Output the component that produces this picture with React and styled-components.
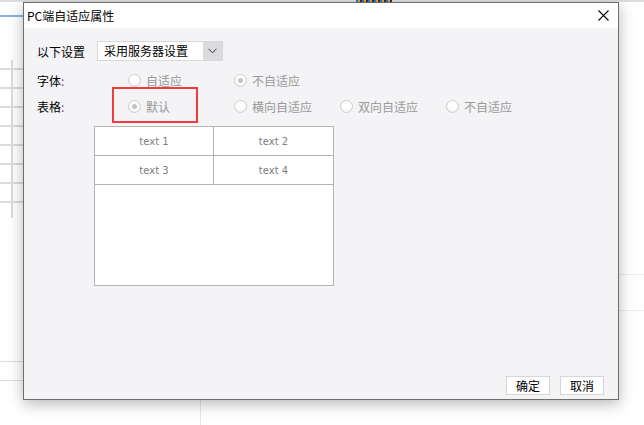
import React from "react";
import styled, { createGlobalStyle } from "styled-components";

const Global = createGlobalStyle`
  html, body { margin: 0; padding: 0; background: #ffffff; }
  body { font-family: "Noto Sans CJK SC", "Noto Sans", sans-serif; font-size: 12px; color: #000; }
  #root { width: 644px; height: 425px; }
`;

const Page = styled.div`
  position: relative;
  width: 644px;
  height: 425px;
  overflow: hidden;
  background: #ffffff;
`;

/* ---- backdrop: the page that lies under the modal ---- */
const TopStrip = styled.div`
  position: absolute;
  left: 0;
  top: 0;
  width: 644px;
  height: 2px;
  background: #dedede;
`;

const Dots = styled.div`
  position: absolute;
  left: 356px;
  top: 0;
  width: 36px;
  height: 2px;
  background: repeating-linear-gradient(90deg, #2a7ad0 0 2px, #f0a030 2px 4px, #333 4px 6px);
`;

const HRule = styled.div`
  position: absolute;
  left: ${(p) => p.$x}px;
  top: ${(p) => p.$y}px;
  width: ${(p) => p.$w}px;
  height: ${(p) => p.$h || 1}px;
  background: ${(p) => p.$c || "#dcdcdc"};
`;

const SheetGrid = styled.div`
  position: absolute;
  left: 0;
  top: 60px;
  width: 24px;
  height: 158px;
  background:
    linear-gradient(90deg, transparent 11px, #dcdcdc 11px, #dcdcdc 13px, transparent 13px),
    repeating-linear-gradient(180deg, transparent 0 8px, #dcdcdc 8px 10px, transparent 10px 19px);
`;

/* ---- dialog ---- */
const Dialog = styled.div`
  position: absolute;
  left: 23px;
  top: 2px;
  width: 596px;
  height: 398px;
  box-sizing: border-box;
  border: 1px solid #6e6e6e;
  background: #f4f4f6;
  box-shadow: 0 4px 14px rgba(0, 0, 0, 0.28);
  display: flex;
  flex-direction: column;
`;

const TitleBar = styled.div`
  height: 25px;
  flex: none;
  background: #ffffff;
  display: flex;
  align-items: center;
  justify-content: space-between;
  padding: 0 9px 0 3px;
`;

const Title = styled.span`
  font-size: 12px;
  color: #000;
  line-height: 25px;
`;

const CloseBtn = styled.button`
  width: 12px;
  height: 12px;
  padding: 0;
  border: none;
  background: transparent;
  display: flex;
  align-items: center;
  justify-content: center;
`;

const Body = styled.div`
  flex: 1;
  display: flex;
  flex-direction: column;
  padding: 13px 13px 4px 13px;
`;

const SettingRow = styled.div`
  height: 20px;
  display: flex;
  align-items: center;
  gap: 11px;
`;

const Label = styled.span`
  font-size: 12px;
  color: #000;
  width: ${(p) => p.$w || "auto"}px;
  flex: none;
`;

const Colon = styled.span`
  color: #8a3a8a;
`;

const Select = styled.div`
  width: 126px;
  height: 20px;
  box-sizing: border-box;
  border: 1px solid #d8d8d8;
  background: #ffffff;
  display: flex;
  align-items: stretch;
  margin-left: 1px;
`;

const SelectText = styled.span`
  flex: 1;
  padding-left: 6px;
  line-height: 18px;
  font-size: 12px;
  color: #000;
`;

const SelectArrow = styled.span`
  width: 19px;
  background: #dadbde;
  display: flex;
  align-items: center;
  justify-content: center;
`;

const OptionRows = styled.div`
  margin-top: 6px;
  display: flex;
  flex-direction: column;
`;

const OptionRow = styled.div`
  height: 26px;
  display: flex;
  align-items: center;
`;

const Option = styled.label`
  position: relative;
  width: 106px;
  height: 18px;
  flex: none;
  display: flex;
  align-items: center;
  gap: 5px;
  color: #999999;
  font-size: 12px;
`;

const Radio = styled.span`
  width: 13px;
  height: 13px;
  box-sizing: border-box;
  border-radius: 50%;
  border: 1px solid #cfcfca;
  background: radial-gradient(circle at 50% 35%, #ffffff 40%, #ececec 100%);
  display: flex;
  align-items: center;
  justify-content: center;
  &::after {
    content: "";
    width: 5px;
    height: 5px;
    border-radius: 50%;
    background: ${(p) => (p.$checked ? "#c4c4c0" : "transparent")};
  }
`;

const Highlight = styled.span`
  position: absolute;
  left: -16px;
  top: -10px;
  width: 86px;
  height: 36px;
  box-sizing: border-box;
  border: 2px solid #f23c3c;
  pointer-events: none;
`;

const Preview = styled.div`
  margin: 7px 0 0 57px;
  width: 240px;
  height: 160px;
  box-sizing: border-box;
  border: 1px solid #b4b4b4;
  background: #ffffff;
  display: grid;
  grid-template-columns: 119px 1fr;
  grid-template-rows: 29px 29px;
  align-content: start;
`;

const Cell = styled.div`
  border-right: ${(p) => (p.$last ? "none" : "1px solid #b4b4b4")};
  border-bottom: 1px solid #b4b4b4;
  display: flex;
  align-items: center;
  justify-content: center;
  font-family: "DejaVu Sans", "Liberation Sans", sans-serif;
  font-size: 10px;
  color: #808080;
`;

const Footer = styled.div`
  margin-top: auto;
  display: flex;
  justify-content: flex-end;
  gap: 10px;
  padding-right: 1px;
`;

const Button = styled.button`
  width: 44px;
  height: 19px;
  box-sizing: border-box;
  border: 1px solid #d6d6d6;
  background: #ffffff;
  font-family: "Noto Sans CJK SC", sans-serif;
  font-size: 12px;
  color: #000;
  padding: 0;
  line-height: 17px;
`;

const fontOpts = [
  { text: "自适应", checked: false },
  { text: "不自适应", checked: true },
];
const tableOpts = [
  { text: "默认", checked: true, mark: true },
  { text: "横向自适应", checked: false },
  { text: "双向自适应", checked: false },
  { text: "不自适应", checked: false },
];

export default function App() {
  return (
    <Page>
      <Global />
      <TopStrip />
      <Dots />
      <HRule $x={0} $y={15} $w={24} $h={2} $c="#86b2ec" />
      <SheetGrid />
      <HRule $x={0} $y={361} $w={24} />
      <HRule $x={0} $y={380} $w={24} />
      <HRule $x={618} $y={274} $w={26} $c="#ececec" />
      <HRule $x={618} $y={310} $w={26} $c="#ececec" />
      <HRule $x={200} $y={400} $w={1} $h={25} $c="#e6e6e6" />

      <Dialog>
        <TitleBar>
          <Title>PC端自适应属性</Title>
          <CloseBtn aria-label="close">
            <svg width="11" height="11" viewBox="0 0 11 11">
              <path d="M0.5 0.5 L10.5 10.5 M10.5 0.5 L0.5 10.5" stroke="#000" strokeWidth="1.1" />
            </svg>
          </CloseBtn>
        </TitleBar>
        <Body>
          <SettingRow>
            <Label>以下设置</Label>
            <Select>
              <SelectText>采用服务器设置</SelectText>
              <SelectArrow>
                <svg width="9" height="6" viewBox="0 0 9 6">
                  <path d="M0.5 0.8 L4.5 4.8 L8.5 0.8" stroke="#333" strokeWidth="1" fill="none" />
                </svg>
              </SelectArrow>
            </Select>
          </SettingRow>
          <OptionRows>
            <OptionRow>
              <Label $w={91}>
                字体<Colon>:</Colon>
              </Label>
              {fontOpts.map((o) => (
                <Option key={o.text}>
                  <Radio $checked={o.checked} />
                  {o.text}
                </Option>
              ))}
            </OptionRow>
            <OptionRow>
              <Label $w={91}>
                表格<Colon>:</Colon>
              </Label>
              {tableOpts.map((o) => (
                <Option key={o.text}>
                  <Radio $checked={o.checked} />
                  {o.text}
                  {o.mark && <Highlight />}
                </Option>
              ))}
            </OptionRow>
          </OptionRows>
          <Preview>
            <Cell>text 1</Cell>
            <Cell $last>text 2</Cell>
            <Cell>text 3</Cell>
            <Cell $last>text 4</Cell>
          </Preview>
          <Footer>
            <Button>确定</Button>
            <Button>取消</Button>
          </Footer>
        </Body>
      </Dialog>
    </Page>
  );
}
